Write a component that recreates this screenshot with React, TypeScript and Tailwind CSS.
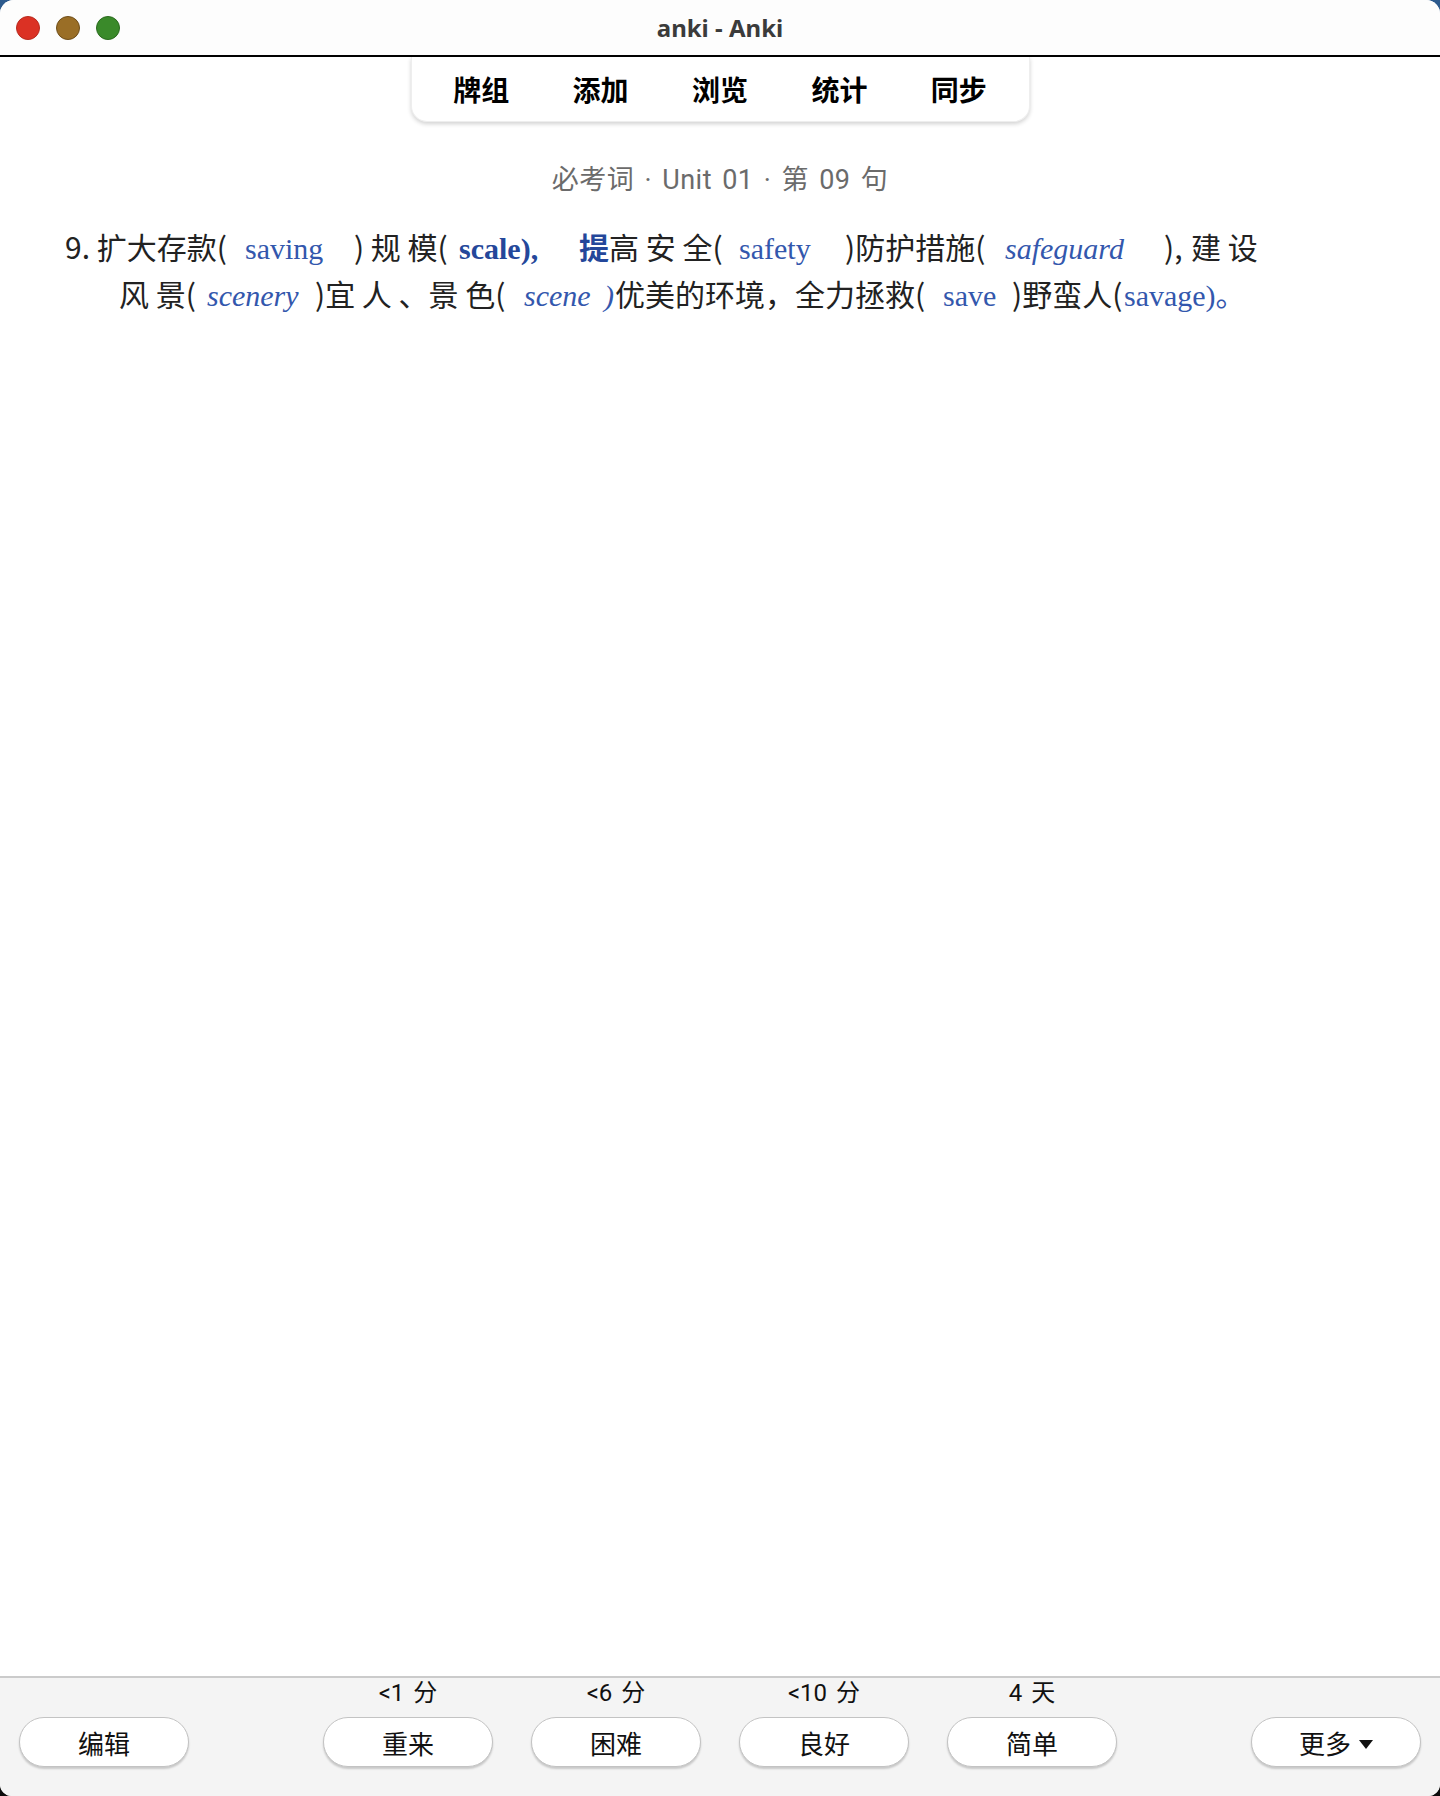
import { ChevronDown } from 'lucide-react';

const sans = "font-['Noto_Sans','Noto_Sans_CJK_SC',sans-serif]";
const cjk = "font-['Noto_Sans_CJK_SC',sans-serif]";
const roboto = "font-['Roboto','Noto_Sans_CJK_SC',sans-serif]";
const serif = "font-['Liberation_Serif','Noto_Sans_CJK_SC',serif]";

type Seg = { text: string; w?: number; kind?: 'cn' | 'en' | 'it' | 'bold' | 'strong' };

// sentence broken into pieces so the gaps from the printed card survive
const line1: Seg[] = [
  { text: '9. 扩大存款(', w: 180 },
  { text: 'saving', w: 109, kind: 'en' },
  { text: ') 规 模(', w: 105 },
  { text: 'scale),', w: 120, kind: 'bold' },
  { text: '提', w: 30, kind: 'strong' },
  { text: '高 安 全(', w: 130 },
  { text: 'safety', w: 106, kind: 'en' },
  { text: ')防护措施(', w: 160 },
  { text: 'safeguard', w: 159, kind: 'it' },
  { text: '),', w: 27 },
  { text: '建 设' },
];

const line2: Seg[] = [
  { text: '风 景(', w: 88 },
  { text: 'scenery', w: 108, kind: 'it' },
  { text: ')宜 人 、景 色(', w: 209 },
  { text: 'scene', w: 80, kind: 'it' },
  { text: ')', w: 11, kind: 'it' },
  { text: '优美的环境，全力拯救(', w: 328 },
  { text: 'save', w: 69, kind: 'en' },
  { text: ')野蛮人(', w: 112 },
  { text: 'savage)。', kind: 'en' },
];

const segClass = {
  cn: `${cjk} text-[#222222]`,
  en: `${serif} text-[#3357ad]`,
  it: `${serif} italic text-[#3357ad]`,
  bold: `${serif} font-bold text-[#24479a]`,
  strong: `${cjk} font-bold text-[#24479a]`,
};

function Line({ segs, indent }: { segs: Seg[]; indent: string }) {
  return (
    <div className={`flex items-baseline whitespace-nowrap h-[47px] text-[30px] leading-[47px] ${indent}`}>
      {segs.map((s, i) => (
        <span key={i} className={`inline-block shrink-0 ${segClass[s.kind ?? 'cn']}`} style={s.w ? { width: s.w } : undefined}>
          {s.text}
        </span>
      ))}
    </div>
  );
}

const answers = [
  { due: '<1 分', label: '重来' },
  { due: '<6 分', label: '困难' },
  { due: '<10 分', label: '良好' },
  { due: '4 天', label: '简单' },
];

function Pill({ children }: { children: React.ReactNode }) {
  return (
    <button className={`flex items-center justify-center gap-1 w-[170px] h-[50px] rounded-full bg-white border border-[#c3c3c3] shadow-[0_2px_2px_rgba(0,0,0,0.18)] text-[26px] text-[#111] ${cjk}`}>
      {children}
    </button>
  );
}

export default function App() {
  return (
    <div className="h-[1796px] w-[1440px] bg-gradient-to-b from-[#2d5b8e] via-[#1a1a1a] to-[#0c0c0c]">
      <div className="flex flex-col h-full rounded-t-[14px] rounded-b-[12px] overflow-hidden bg-white">
        {/* title bar */}
        <div className="grid grid-cols-[1fr_auto_1fr] items-center h-[57px] bg-[#fdfdfd] border-b-2 border-black shrink-0">
          <div className="flex items-center gap-[16px] pl-[16px]">
            <span className="w-[24px] h-[24px] rounded-full bg-[#db3124] border border-[#b82a1e]" />
            <span className="w-[24px] h-[24px] rounded-full bg-[#9a6e26] border border-[#6f4e1a]" />
            <span className="w-[24px] h-[24px] rounded-full bg-[#3a8a2a] border border-[#2a6a1e]" />
          </div>
          <div className={`text-[24px] font-bold text-[#3b3b3b] ${sans}`}>anki - Anki</div>
          <div />
        </div>

        {/* reviewer */}
        <div className="flex-1 flex flex-col items-center">
          <nav className="flex w-[619px] h-[65px] px-[10px] items-center rounded-b-[16px] bg-white shadow-[0_2px_4px_rgba(0,0,0,0.18)] border-x border-b border-[#eeeeee]">
            {['牌组', '添加', '浏览', '统计', '同步'].map(t => (
              <span key={t} className={`w-[120px] text-center text-[28px] font-bold text-black ${cjk}`}>
                {t}
              </span>
            ))}
          </nav>

          <div className={`mt-[42px] text-[27px] leading-[32px] tracking-[0.5px] [word-spacing:3px] text-[#6b6b6b] ${roboto}`}>
            必考词 · Unit 01 · 第 09 句
          </div>

          <div className="self-stretch mt-[27px]">
            <Line segs={line1} indent="pl-[65px]" />
            <Line segs={line2} indent="pl-[119px]" />
          </div>
        </div>

        {/* answer bar */}
        <div className="flex items-end h-[120px] shrink-0 px-[19px] pb-[29px] bg-[#f4f4f4] border-t-2 border-[#cbcbcb]">
          <Pill>编辑</Pill>
          <div className="flex gap-[38px] ml-[134px]">
            {answers.map(a => (
              <div key={a.label} className="flex flex-col items-center">
                <span className={`h-[26px] mb-[11px] text-[24px] leading-[26px] [word-spacing:3px] text-[#111] ${roboto}`}>{a.due}</span>
                <Pill>{a.label}</Pill>
              </div>
            ))}
          </div>
          <div className="ml-auto">
            <Pill>
              更多
              <ChevronDown className="hidden" />
              <svg width="14" height="9" viewBox="0 0 14 9" className="ml-[4px] mt-[4px]">
                <path d="M0 0h14L7 9z" fill="#111" />
              </svg>
            </Pill>
          </div>
        </div>
      </div>
    </div>
  );
}
